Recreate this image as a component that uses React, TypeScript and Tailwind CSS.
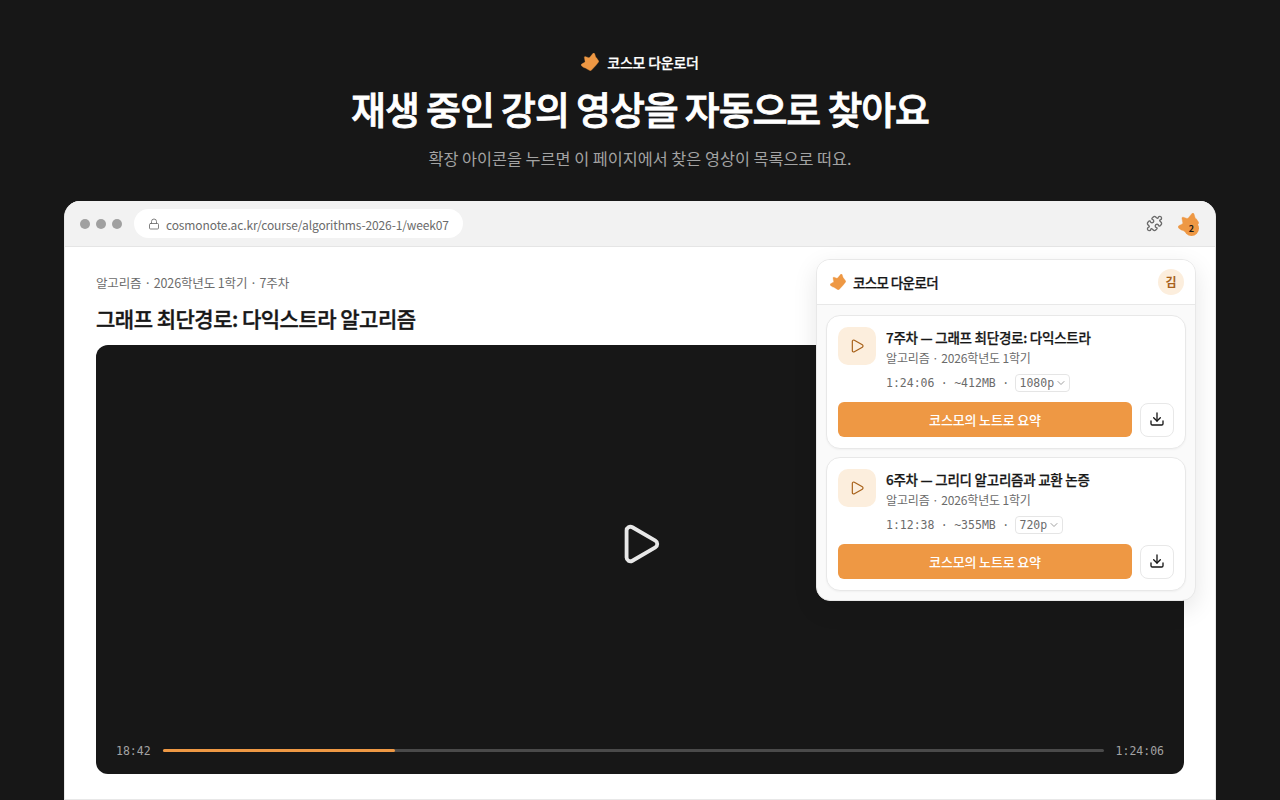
import React from "react";
import { ChevronDown, Download, Lock, Play, Puzzle } from "lucide-react";

interface Lecture {
  title: string;
  course: string;
  duration: string;
  size: string;
  quality: string;
}

const lectures: Lecture[] = [
  {
    title: "7주차 — 그래프 최단경로: 다익스트라",
    course: "알고리즘 · 2026학년도 1학기",
    duration: "1:24:06",
    size: "~412MB",
    quality: "1080p",
  },
  {
    title: "6주차 — 그리디 알고리즘과 교환 논증",
    course: "알고리즘 · 2026학년도 1학기",
    duration: "1:12:38",
    size: "~355MB",
    quality: "720p",
  },
];

const Logo: React.FC<{ className?: string }> = ({ className }) => (
  <svg viewBox="0 0 54 54" className={className} fill="#ee9844" stroke="#ee9844" strokeWidth="1" strokeLinejoin="round">
    <path d="M36 1 Q39 -1 41 2 L44 12 Q45 14 47 15 L53 24 Q54 26 52 28 L45 37 L31 52 Q28 54 25 52 L13 45 Q9 45 2 39 Q-1 35 2 33 L11 28 Q13 27 12 24 L10 13 Q10 10 14 11 L23 14 Q26 14 27 12 Z" />
  </svg>
);

const LectureCard: React.FC<{ lecture: Lecture }> = ({ lecture }) => (
  <article className="h-[134px] rounded-[14px] border border-[#e8e8e8] bg-white p-[11px] shadow-[0_1px_2px_rgba(0,0,0,0.04)]">
    <div className="flex gap-[10px]">
      <div className="flex size-[38px] shrink-0 items-center justify-center rounded-[10px] bg-[#fceedd] text-[#a8621b]">
        <Play className="size-4" strokeWidth={1.8} />
      </div>
      <div className="h-[75px]">
        <h3 className="-mt-px text-[13.5px] leading-[22px] font-medium tracking-[-0.25px] text-[#171717] [-webkit-text-stroke:0.25px]">
          {lecture.title}
        </h3>
        <p className="text-[12px] leading-[19px] tracking-[-0.15px] text-[#6b6b6b]">{lecture.course}</p>
        <div className="mt-[7px] flex h-[18px] items-center gap-[6.4px] font-['DejaVu_Sans_Mono',monospace] text-[11.5px] text-[#6b6b6b]">
          <span className="pt-[2px]">{lecture.duration}</span>
          <span className="pt-[2px]">·</span>
          <span className="pt-[2px]">{lecture.size}</span>
          <span className="pt-[2px]">·</span>
          <span className="flex h-[18px] items-center gap-[1px] rounded-[4px] border border-[#e5e5e5] pr-[2px] pl-[3px]">
            <span className="pt-[2px]">{lecture.quality}</span>
            <ChevronDown className="size-3 text-[#a0a0a0]" />
          </span>
        </div>
      </div>
    </div>
    <div className="flex items-center gap-2">
      <button className="h-[35px] w-[294px] rounded-md bg-[#ee9844] text-[13px] leading-[19px] font-medium tracking-[-0.15px] text-white">
        코스모의 노트로 요약
      </button>
      <button className="flex size-[34px] items-center justify-center rounded-lg border border-[#e8e8e8] pb-px text-[#171717]">
        <Download className="size-4" />
      </button>
    </div>
  </article>
);

const PopupPanel = () => (
  <aside className="absolute top-[58px] right-[19px] h-[342px] w-[380px] overflow-hidden rounded-[14px] border border-[#e8e8e8] bg-[#fafafa] shadow-[0_8px_24px_rgba(0,0,0,0.1)]">
    <div className="flex h-[45px] items-center border-b border-[#e8e8e8] bg-white pr-[11px] pl-[13px]">
      <Logo className="size-4" />
      <b className="ml-[7px] text-[13.5px] font-medium tracking-[-0.62px] text-[#171717] [-webkit-text-stroke:0.25px]">코스모 다운로더</b>
      <span className="ml-auto flex size-[26px] items-center justify-center rounded-full bg-[#fceedd] text-[12px] font-semibold text-[#a8621b]">
        김
      </span>
    </div>
    <div className="flex flex-col gap-2 p-[9px] pt-[10px]">
      {lectures.map((lecture) => (
        <LectureCard key={lecture.title} lecture={lecture} />
      ))}
    </div>
  </aside>
);

const VideoPlayer = () => (
  <div className="mt-[11px] flex h-[429px] flex-col rounded-xl bg-[#171717]">
    <div className="flex h-[398px] shrink-0 items-center justify-center text-[#e8e8e8]">
      <Play className="size-[46px]" />
    </div>
    <div className="flex h-[15px] items-center gap-3 px-5 font-['DejaVu_Sans_Mono',monospace] text-[11.5px] text-[#a3a3a3]">
      <span className="pt-[2px]">18:42</span>
      <div className="h-[3px] grow rounded-full bg-[#4a4a4a]">
        <div className="h-full w-[24.7%] rounded-full bg-[#ee9844]" />
      </div>
      <span className="pt-[2px]">1:24:06</span>
    </div>
  </div>
);

export default function App() {
  return (
    <main className="h-[800px] overflow-hidden bg-[#171717] font-['Noto_Sans_CJK_KR',sans-serif]">
      <header className="flex h-[201px] flex-col items-center pt-[51px] text-white">
        <div className="flex h-[22px] items-center gap-2">
          <Logo className="size-[18px]" />
          <span className="text-[14px] font-medium tracking-[-0.25px] [-webkit-text-stroke:0.25px]">코스모 다운로더</span>
        </div>
        <h1 className="mt-[10px] text-[38px] leading-[50px] font-medium tracking-[-1.16px] [-webkit-text-stroke:0.8px]">
          재생 중인 강의 영상을 자동으로 찾아요
        </h1>
        <p className="mt-[12px] text-[16.3px] leading-[26px] text-[#a3a3a3]">확장 아이콘을 누르면 이 페이지에서 찾은 영상이 목록으로 떠요.</p>
      </header>
      <section className="relative mx-16 h-[599px] rounded-t-[16px] border-x border-b border-[#e8e8e8] bg-white">
        <div className="flex h-[46px] items-center rounded-t-[15px] border-b border-[#e5e5e5] bg-[#f2f2f2] px-[15px]">
          <div className="flex gap-[6px]">
            <i className="size-[10px] rounded-full bg-[#a0a0a0]" />
            <i className="size-[10px] rounded-full bg-[#a0a0a0]" />
            <i className="size-[10px] rounded-full bg-[#a0a0a0]" />
          </div>
          <div className="ml-3 flex h-[29px] w-[329px] items-center gap-[6px] rounded-full bg-white pl-[14px] text-[12px] tracking-[-0.12px] whitespace-nowrap text-[#6b6b6b]">
            <Lock className="size-3 shrink-0" strokeWidth={1.7} />
            <span className="pt-[2px]">cosmonote.ac.kr/course/algorithms-2026-1/week07</span>
          </div>
          <Puzzle className="ml-auto size-[17px] text-[#6b6b6b]" strokeWidth={1.9} />
          <div className="relative ml-[15px] size-[22px]">
            <Logo className="size-[21px]" />
            <span className="absolute top-[8px] left-[6px] flex size-[15px] items-center justify-center rounded-full bg-[#ee9844] text-[9px] leading-none font-bold text-[#171717]">
              2
            </span>
          </div>
        </div>
        <div className="px-[31px] pt-[26px]">
          <p className="text-[12.5px] leading-5 tracking-[-0.13px] text-[#6b6b6b]">알고리즘 · 2026학년도 1학기 · 7주차</p>
          <h2 className="mt-[9px] text-[21px] leading-[32px] font-medium tracking-[-0.5px] text-[#171717] [-webkit-text-stroke:0.4px]">
            그래프 최단경로: 다익스트라 알고리즘
          </h2>
          <VideoPlayer />
        </div>
        <PopupPanel />
      </section>
    </main>
  );
}
